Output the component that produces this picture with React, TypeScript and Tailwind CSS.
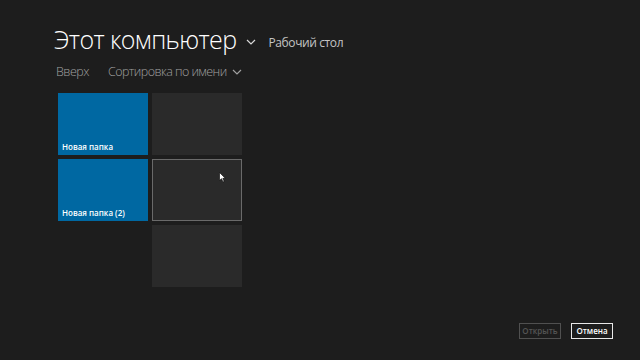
import React from "react";

function Chevron({ size = 10, color = "#d0d0d0", stroke = 1.2 }: { size?: number; color?: string; stroke?: number }) {
  return (
    <svg width={size} height={size * 0.6} viewBox="0 0 10 6" fill="none">
      <path d="M1 1 L5 5 L9 1" stroke={color} strokeWidth={stroke} />
    </svg>
  );
}

function Tile({ label, kind }: { label?: string; kind: "blue" | "gray" | "selected" | "none" }) {
  if (kind === "none") return <div />;
  if (kind === "blue")
    return (
      <div className="bg-[#0068a2] flex items-end px-[4px] pb-[4px]">
        <span className="text-white text-[8px] font-semibold leading-none">{label}</span>
      </div>
    );
  if (kind === "selected")
    return (
      <div className="bg-[#2a2a2a] border-[1.5px] border-[#6a6a6a] relative">
        <svg className="absolute left-[66px] top-[12px]" width="7" height="11" viewBox="0 0 7 11">
          <path d="M0.5 0.5 L0.5 8.5 L2.5 6.7 L4 10 L5.2 9.4 L3.8 6.3 L6.3 6.3 Z" fill="#ffffff" stroke="#000" strokeWidth="0.6" />
        </svg>
      </div>
    );
  return <div className="bg-[#2a2a2a]" />;
}

export default function App() {
  return (
    <div
      className="w-[640px] h-[360px] bg-[#1d1d1d] flex flex-col overflow-hidden"
      style={{ fontFamily: '"Open Sans", "Noto Sans", sans-serif' }}
    >
      <div className="flex items-end pl-[54px] pt-[21px] h-[52px]">
        <span className="text-[25px] font-light text-white leading-none tracking-[-0.6px]">Этот компьютер</span>
        <span className="ml-[9px] mb-[7px]">
          <Chevron size={10} color="#d8d8d8" />
        </span>
        <span className="ml-[13px] text-[12px] text-[#c4c4c4] leading-none mb-[3px] tracking-[-0.4px]">Рабочий стол</span>
      </div>
      <div className="flex items-end pl-[56px] mt-[12px] h-[14px]">
        <span className="text-[12.5px] font-light text-[#a0a0a0] leading-none tracking-[-0.5px]">Вверх</span>
        <span className="ml-[19px] text-[12.5px] font-light text-[#a0a0a0] leading-none tracking-[-0.55px]">Сортировка по имени</span>
        <span className="ml-[5px] mb-[3px]">
          <Chevron size={10} color="#a0a0a0" />
        </span>
      </div>
      <div className="pl-[58px] mt-[15px] grid grid-flow-col grid-rows-[62px_62px_62px] grid-cols-[90px_90px] gap-[4px] w-max">
        <Tile kind="blue" label="Новая папка" />
        <Tile kind="blue" label="Новая папка (2)" />
        <Tile kind="none" />
        <Tile kind="gray" />
        <Tile kind="selected" />
        <Tile kind="gray" />
      </div>
      <div className="mt-auto flex justify-end gap-[10px] pr-[27px] pb-[21px]">
        <div className="w-[42px] h-[16px] border-[1.5px] border-[#505050] flex items-center justify-center text-[8px] font-semibold text-[#555555]">
          Открыть
        </div>
        <div className="w-[42px] h-[16px] border-[1.5px] border-[#e8e8e8] flex items-center justify-center text-[8px] font-semibold text-white">
          Отмена
        </div>
      </div>
    </div>
  );
}
